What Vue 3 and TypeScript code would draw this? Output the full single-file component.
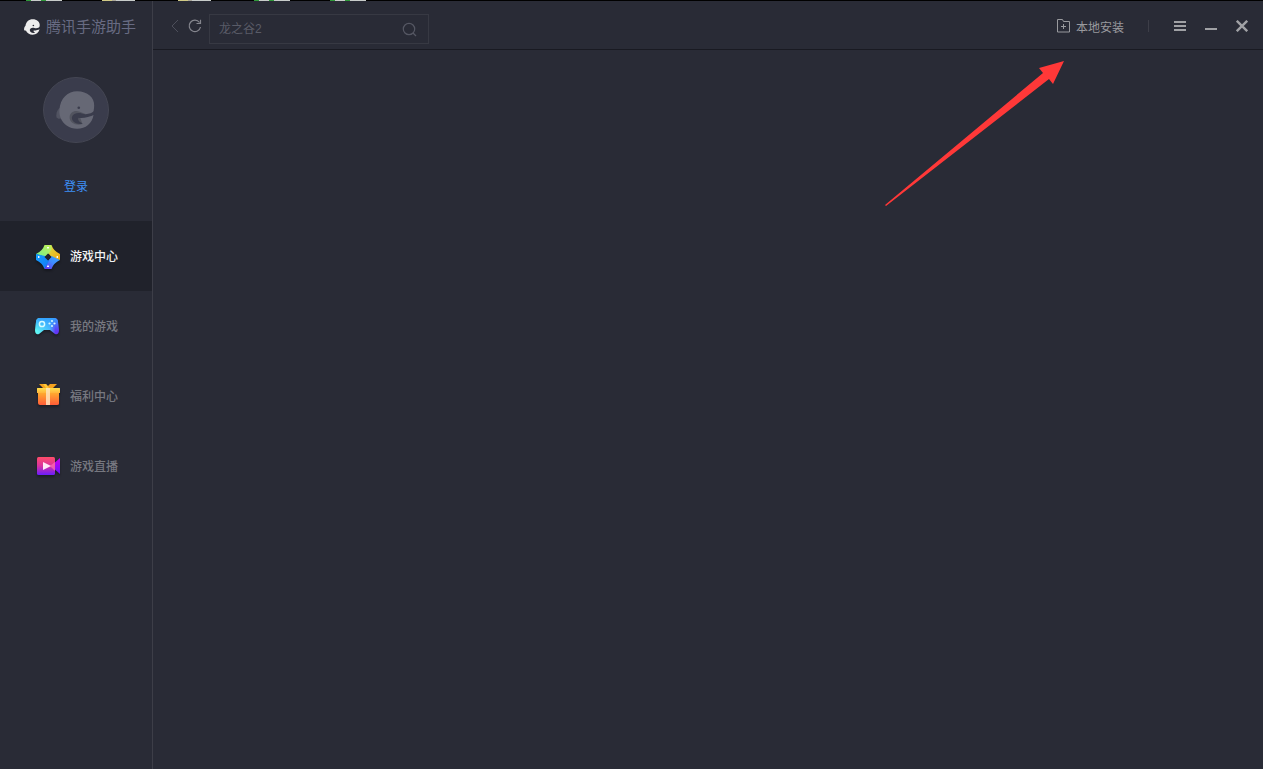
<script setup lang="ts">
import { ref } from 'vue'

interface NavItem {
  id: string
  label: string
}

const navItems: NavItem[] = [
  { id: 'center', label: '游戏中心' },
  { id: 'mine', label: '我的游戏' },
  { id: 'gift', label: '福利中心' },
  { id: 'live', label: '游戏直播' },
]
const active = ref('center')
const keyword = ref('')
</script>

<template>
  <div class="window">
    <svg class="edge" height="1" width="400" viewBox="0 0 400 1" shape-rendering="crispEdges" aria-hidden="true">
      <g v-for="x in [26, 254, 330]" :key="x">
        <path :d="`M${x} 0h36v1h-36z`" fill="#c8ccca" />
        <path :d="`M${x} 0h5v1h-5zM${x + 15} 0h5v1h-5z`" fill="#2f9a3a" />
      </g>
      <g v-for="x in [102, 178]" :key="x">
        <path :d="`M${x} 0h33v1h-33z`" fill="#c8ccca" />
        <path :d="`M${x} 0h10v1h-10z`" fill="#d0c986" />
        <path :d="`M${x + 10} 0h4v1h-4z`" fill="#a9a598" />
      </g>
    </svg>

    <aside class="sidebar">
      <div class="brand">
        <svg width="16" height="16" viewBox="76 77 118 116" aria-hidden="true">
          <path fill="#ededed" d="M77 158C75 144 79 134 87 126C90 98 112 78 140 78C172 78 193 98 192 121C192 132 189 140 190 150C186 176 166 192 140 192C116 192 98 178 90 160L83 162Z" />
          <path fill="#292b36" d="M194 132C184 144 167 148 152 142C138 137 122 142 119 156C117 170 132 184 158 179C150 173 144 168 147 161C162 162 178 158 194 150Z" />
          <circle cx="145" cy="124" r="6" fill="#292b36" />
        </svg>
        <span>腾讯手游助手</span>
      </div>

      <div class="account">
        <div class="avatar">
          <svg width="39" height="38" viewBox="76 77 118 116" aria-hidden="true">
            <path fill="#515361" d="M77 158C75 144 79 134 90 126L104 160L83 162Z" />
            <path fill="#666875" d="M86 135C88 99 112 78 140 78C172 78 193 98 192 121C192 132 189 140 190 150C186 176 166 192 140 192C116 192 98 178 90 160C87 152 85 145 86 135Z" />
            <path fill="#52545f" d="M117 158C117 142 132 134 148 140L166 147L150 160L156 178C138 184 117 175 117 158Z" />
            <path fill="#3a3c4c" d="M194 136C184 147 168 150 154 146C142 142 127 146 124 157C123 170 136 180 157 177C150 173 140 168 144 159C160 161 176 157 194 149Z" />
            <circle cx="145" cy="128" r="4" fill="#3a3c4c" />
          </svg>
        </div>
        <a class="login" href="#login">登录</a>
      </div>

      <nav>
        <button
          v-for="item in navItems"
          :key="item.id"
          type="button"
          class="nav-item"
          :class="{ active: item.id === active }"
          @click="active = item.id"
        >
          <svg v-if="item.id === 'center'" class="nav-icon" viewBox="0 0 28 28" aria-hidden="true">
            <defs>
              <linearGradient id="c-top" x1="0" y1="1" x2="1" y2="0"><stop offset="0" stop-color="#6ff08c" /><stop offset="1" stop-color="#c6ee55" /></linearGradient>
              <linearGradient id="c-right" x1="0" y1="0" x2="1" y2="1"><stop offset="0" stop-color="#d8e04a" /><stop offset="1" stop-color="#f5a50c" /></linearGradient>
              <linearGradient id="c-bottom" x1="1" y1="0" x2="0" y2="1"><stop offset="0" stop-color="#35a8ff" /><stop offset="0.500" stop-color="#3f8cff" /><stop offset="1" stop-color="#6a2df5" /></linearGradient>
              <linearGradient id="c-left" x1="0" y1="0" x2="1" y2="1"><stop offset="0" stop-color="#12a0ff" /><stop offset="1" stop-color="#1677f5" /></linearGradient>
            </defs>
            <path d="M17.500 3Q19.500 9 26 12v6l-7-1-5-6z" fill="url(#c-right)" />
            <path d="M10.500 3h7v4l-3 5-3 3-9.500-3Q8.500 9 10.500 3z" fill="url(#c-top)" />
            <path d="M26 18Q19.500 21 17.500 27h-7l4-9 3-4z" fill="url(#c-bottom)" />
            <path d="M2 12v6Q8.500 21 10.500 27l4.500-8-4-5z" fill="url(#c-left)" />
            <path d="M14 11.500l3.500 3.500-3.500 3.500-3.500-3.500z" fill="#20222b" />
            <path d="M14 5l1 1h-2zM14 25l-1-1h2zM4 15l1-1v2zM24 15l-1-1v2z" fill="#fff" stroke="#fff" stroke-width="0.800" />
          </svg>

          <svg v-else-if="item.id === 'mine'" class="nav-icon" viewBox="0 0 28 28" aria-hidden="true">
            <defs>
              <linearGradient id="pad" x1="0" y1="0" x2="1" y2="0"><stop offset="0" stop-color="#63fff2" /><stop offset="0.600" stop-color="#4ac0ff" /><stop offset="0.850" stop-color="#6236f5" /></linearGradient>
              <linearGradient id="pad-top" x1="0" y1="0" x2="0" y2="1"><stop offset="0" stop-color="#33a1ff" /><stop offset="0.800" stop-color="#33a1ff" stop-opacity="0" /></linearGradient>
            </defs>
            <path d="M6 6h14c3 0 4 2 4 4l1 8c0 4-2 5-4 4l-5-4h-6l-5 4c-2 1-4 0-4-4l1-8c0-2 1-4 4-4z" fill="url(#pad)" />
            <path d="M6 6h14c3 0 4 2 4 4l1 8c0 4-2 5-4 4l-5-4h-6l-5 4c-2 1-4 0-4-4l1-8c0-2 1-4 4-4z" fill="url(#pad-top)" />
            <circle cx="8" cy="12" r="2.600" fill="none" stroke="#d9fbff" stroke-width="1.500" />
            <g fill="#d5f4ff"><circle cx="18" cy="9" r="1.100" /><circle cx="18" cy="14" r="1.100" /><circle cx="15.500" cy="11.500" r="1.100" /><circle cx="20.500" cy="11.500" r="1.100" /></g>
          </svg>

          <svg v-else-if="item.id === 'gift'" class="nav-icon" viewBox="0 0 28 28" aria-hidden="true">
            <defs>
              <linearGradient id="box" x1="0" y1="0" x2="0" y2="1"><stop offset="0" stop-color="#ffb02e" /><stop offset="1" stop-color="#ff5c38" /></linearGradient>
              <linearGradient id="lid" x1="0" y1="0" x2="0" y2="1"><stop offset="0" stop-color="#ffe04e" /><stop offset="1" stop-color="#ffb43c" /></linearGradient>
            </defs>
            <path d="M5 2l7 0 2 2 2-2h7l-4 4h-10z" fill="#f5a21e" />
            <path d="M9 2h3l3 4h-3z" fill="#ffc93a" />
            <path d="M4 10h21v11c0 1 0 2-2 2h-17c-1 0-2-1-2-2z" fill="url(#box)" />
            <path d="M4 6h21c1 0 1 0 1 1v4h-23v-4c0-1 0-1 1-1z" fill="url(#lid)" />
            <path d="M12 6h4v17h-4z" fill="#ffe3bd" opacity="0.850" />
          </svg>

          <svg v-else class="nav-icon" viewBox="0 0 28 28" aria-hidden="true">
            <defs>
              <linearGradient id="cam" x1="0" y1="0" x2="0" y2="1"><stop offset="0" stop-color="#ff4d68" /><stop offset="0.500" stop-color="#d832a0" /><stop offset="1" stop-color="#6a1cff" /></linearGradient>
              <linearGradient id="lens" x1="0" y1="0" x2="0" y2="1"><stop offset="0" stop-color="#d000ee" /><stop offset="1" stop-color="#6a14ff" /></linearGradient>
            </defs>
            <path d="M26 6v16l-9-8z" fill="url(#lens)" />
            <rect x="3" y="5" width="18" height="18" rx="1.500" fill="url(#cam)" />
            <path d="M21 10v9l-5-5z" fill="#ff6db5" opacity="0.700" />
            <path d="M9 10l8 4-8 4z" fill="#ffe9f6" />
          </svg>
          <span>{{ item.label }}</span>
        </button>
      </nav>
    </aside>

    <div class="content">
      <header class="toolbar">
        <button type="button" class="icon-btn back" aria-label="后退">
          <svg width="8" height="14" viewBox="0 0 8 14"><path d="M7 1L1 7l6 6" fill="none" stroke="#4d4f5b" /></svg>
        </button>
        <button type="button" class="icon-btn refresh" aria-label="刷新">
          <svg width="14" height="14" viewBox="0 0 14 14" fill="none" stroke="#85868e" stroke-width="1.200"><path d="M12.500 8A5.700 5.700 0 1 1 11.500 3.500M12.500 0.800V4.500H8.500" /></svg>
        </button>
        <form class="search" role="search" @submit.prevent>
          <input v-model="keyword" type="text" placeholder="龙之谷2" aria-label="搜索游戏" />
          <button type="submit" class="icon-btn" aria-label="搜索">
            <svg width="15" height="15" viewBox="0 0 15 15" fill="none" stroke="#555763" stroke-width="1.200"><circle cx="7" cy="7" r="5.700" /><path d="M11 11l3 3" /></svg>
          </button>
        </form>

        <div class="actions">
          <button type="button" class="install">
            <svg width="14" height="14" viewBox="0 0 14 14" fill="none" stroke="#999a9e"><path d="M0.500 0.500h5l1 2h6v10.500h-12zM6.500 5v5M4 7.500h5" /></svg>
            <span>本地安装</span>
          </button>
          <span class="divider"></span>
          <button type="button" class="icon-btn" aria-label="菜单">
            <svg width="12" height="12" viewBox="0 0 12 12" fill="#a0a1a5"><path d="M0 1h12v2H0zM0 5h12v2H0zM0 9h12v2H0z" /></svg>
          </button>
          <button type="button" class="icon-btn" aria-label="最小化">
            <svg width="12" height="12" viewBox="0 0 12 12" fill="#a0a1a5"><path d="M0 8h12v2H0z" /></svg>
          </button>
          <button type="button" class="icon-btn" aria-label="关闭">
            <svg width="12" height="12" viewBox="0 0 12 12" fill="none" stroke="#a0a1a5" stroke-width="2.400"><path d="M0.800 0.800l10.400 10.400M11.200 0.800L0.800 11.200" /></svg>
          </button>
        </div>
      </header>
      <main class="stage">
        <svg class="pointer" width="180" height="146" viewBox="0 0 180 146" aria-hidden="true">
          <path d="M0 144L158 12L154 7L179 0L168 23L164 18L1 145Z" fill="#ff3838" />
        </svg>
      </main>
    </div>
  </div>
</template>

<style>
body {
  margin: 0;
  background: #292b36;
}
</style>

<style scoped>
.window {
  box-sizing: border-box;
  position: relative;
  display: flex;
  min-height: 100vh;
  border-top: 1px solid #000;
  background: #292b36;
  color: #85868e;
  font: 12px/16px "Liberation Sans", "Noto Sans CJK SC", sans-serif;
}

.edge {
  position: absolute;
  top: -1px;
  left: 0;
}

button {
  padding: 0;
  border: 0;
  background: none;
  color: inherit;
  font: inherit;
  cursor: pointer;
}

svg {
  display: block;
  flex: none;
}

.sidebar {
  flex: none;
  width: 152px;
  border-right: 1px solid #3d3e48;
}

.brand {
  display: flex;
  align-items: center;
  gap: 6px;
  height: 52px;
  padding-left: 24px;
  color: #686b83;
  font-size: 15px;
  line-height: 20px;
  white-space: nowrap;
}

.account {
  display: flex;
  flex-direction: column;
  align-items: center;
  gap: 36px;
  padding: 24px 0 26px;
}

.avatar {
  display: flex;
  align-items: center;
  box-sizing: border-box;
  width: 66px;
  height: 66px;
  padding-left: 12px;
  border: 1px solid #444653;
  border-radius: 50%;
  background: #3a3c4c;
}

.login {
  color: #3d8ff5;
  text-decoration: none;
}

.nav-item {
  display: flex;
  align-items: center;
  gap: 8px;
  width: 100%;
  height: 70px;
  padding-left: 34px;
  color: #777880;
  font-weight: 500;
}

.nav-item span {
  padding-top: 2px;
}

.nav-item.active {
  background: #20222b;
  color: #f2f2f3;
}

.nav-icon {
  width: 28px;
  height: 28px;
  filter: drop-shadow(0 2px 1px rgba(0, 0, 0, 0.3));
}

.content {
  display: flex;
  flex: 1;
  flex-direction: column;
  min-width: 0;
}

.toolbar {
  display: flex;
  align-items: center;
  box-sizing: border-box;
  height: 49px;
  padding: 2px 15px 0 18px;
  border-bottom: 1px solid #191a22;
}

.icon-btn {
  display: grid;
  place-items: center;
}

.refresh {
  margin: 0 7px 0 9px;
}

.search {
  display: flex;
  align-items: center;
  box-sizing: border-box;
  width: 220px;
  height: 30px;
  margin-top: 6px;
  padding: 0 11px 0 9px;
  border: 1px solid #373943;
}

.search input {
  flex: 1;
  min-width: 0;
  padding: 0;
  border: 0;
  outline: 0;
  background: none;
  color: #a0a1a5;
  font: inherit;
}

.search input::placeholder {
  color: #5a5c68;
  opacity: 1;
}

.actions {
  display: flex;
  align-items: center;
  gap: 19px;
  margin-left: auto;
}

.install {
  display: flex;
  align-items: center;
  gap: 5px;
  color: #999a9e;
}

.install span {
  padding-top: 3px;
}

.divider {
  width: 1px;
  height: 12px;
  margin: 0 6px 0 5px;
  background: #3d3e48;
}

.stage {
  position: relative;
  flex: 1;
}

.pointer {
  position: absolute;
  top: 11px;
  right: 198px;
}
</style>
